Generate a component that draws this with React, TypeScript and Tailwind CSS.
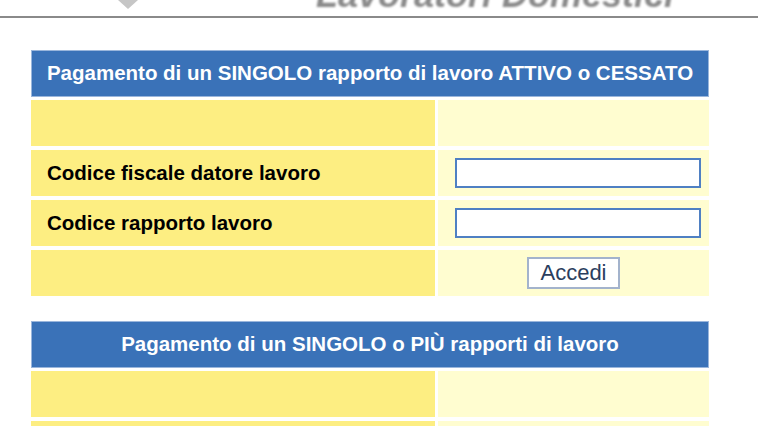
import React from 'react';

const font = { fontFamily: '"Liberation Sans", Arial, Helvetica, sans-serif' };

const Header: React.FC = () => (
  <div className="h-[16px] overflow-hidden border-b-2 border-[#8a8a8a] box-content">
    <div className="flex items-start -mt-[25px]">
      <svg className="ml-[118px] mt-[25px]" width="20" height="9" viewBox="0 0 20 9">
        <polygon points="0,0 20,0 10,9" fill="#c6c6c6" />
      </svg>
      <span className="ml-[178px] text-[36px] leading-[39px] font-bold italic text-[#8a8a8a] blur-[0.8px]">
        Lavoratori Domestici
      </span>
    </div>
  </div>
);

const Row: React.FC<{ label?: string; children?: React.ReactNode }> = ({ label, children }) => (
  <>
    <div className="h-[46px] bg-[#fdee82] flex items-center pl-[16px] text-[20.5px] font-bold text-black">
      {label}
    </div>
    <div className="h-[46px] bg-[#fffdd0] flex items-center">{children}</div>
  </>
);

const Field: React.FC = () => (
  <input type="text" className="ml-[17px] w-[246px] h-[30px] border-2 border-[#4f80c3] bg-white outline-none" />
);

const Panel: React.FC<{ title: string; children: React.ReactNode }> = ({ title, children }) => (
  <div className="mx-[31px] w-[678px]">
    <div className="h-[47px] bg-[#3a72b8] border border-[#9ab6dc] flex items-center justify-center text-white text-[20.5px] font-bold">
      {title}
    </div>
    <div className="mt-[3px] grid grid-cols-[404px_271px] gap-x-[3px] gap-y-[4px]">{children}</div>
  </div>
);

export default function App() {
  return (
    <div className="w-[758px] h-[426px] overflow-hidden bg-white" style={font}>
      <Header />
      <div className="mt-[32px]">
        <Panel title="Pagamento di un SINGOLO rapporto di lavoro ATTIVO o CESSATO">
          <Row />
          <Row label="Codice fiscale datore lavoro">
            <Field />
          </Row>
          <Row label="Codice rapporto lavoro">
            <Field />
          </Row>
          <Row>
            <div className="flex-1 flex justify-center">
              <button className="w-[93px] h-[32px] border-2 border-[#a3b3cc] bg-white text-[22px] text-[#2b3e5e] leading-none">
                Accedi
              </button>
            </div>
          </Row>
        </Panel>
      </div>
      <div className="mt-[25px]">
        <Panel title="Pagamento di un SINGOLO o PIÙ rapporti di lavoro">
          <Row />
          <Row />
        </Panel>
      </div>
    </div>
  );
}
